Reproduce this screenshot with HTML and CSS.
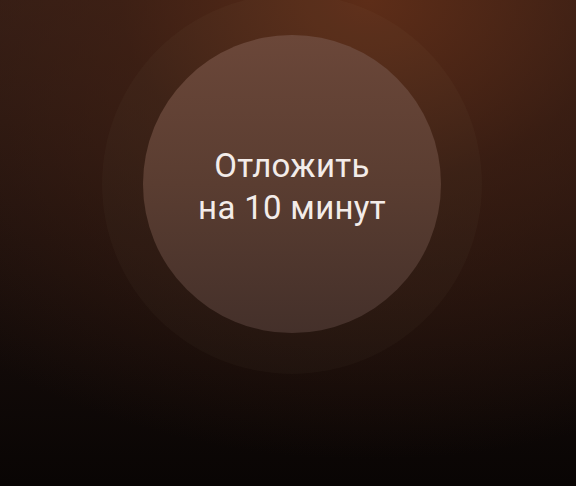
FILE: index.html
```html
<!DOCTYPE html>
<html lang="ru">
<head>
<meta charset="utf-8">
<title>Отложить</title>
<link rel="stylesheet" href="styles.css">
</head>
<body>
<div class="screen">
  <div class="ring">
    <button class="snooze" type="button">
      <span class="label">Отложить<br>на 10 минут</span>
    </button>
  </div>
</div>
</body>
</html>
```
FILE: styles.css
```css
html, body {
  margin: 0;
  padding: 0;
  background: #0a0605;
}
.screen {
  width: 576px;
  height: 486px;
  box-sizing: border-box;
  padding-left: 8px;
  overflow: hidden;
  display: flex;
  justify-content: center;
  align-items: flex-start;
  background:
    radial-gradient(ellipse 620px 460px at 64% 0%, rgba(96, 46, 24, 0.95) 0%, rgba(72, 35, 20, 0.6) 40%, rgba(30, 16, 12, 0) 100%),
    linear-gradient(to bottom, #2c1b16 0%, #1a0f0c 50%, #090504 100%);
}
.ring {
  width: 380px;
  height: 380px;
  margin-top: -6px;
  border-radius: 50%;
  background: rgba(255, 240, 230, 0.025);
  display: flex;
  align-items: center;
  justify-content: center;
}
.snooze {
  width: 298px;
  height: 298px;
  border: none;
  padding: 6px 0 0 0;
  border-radius: 50%;
  background: linear-gradient(to bottom, #6b4739 0%, #5a3d31 50%, #44302a 100%);
  display: flex;
  align-items: center;
  justify-content: center;
  font-family: Roboto, "Noto Sans", sans-serif;
  font-size: 33px;
  letter-spacing: 0.3px;
  line-height: 42px;
  color: #f3ece9;
  text-align: center;
}
.label {
  display: block;
}
```
